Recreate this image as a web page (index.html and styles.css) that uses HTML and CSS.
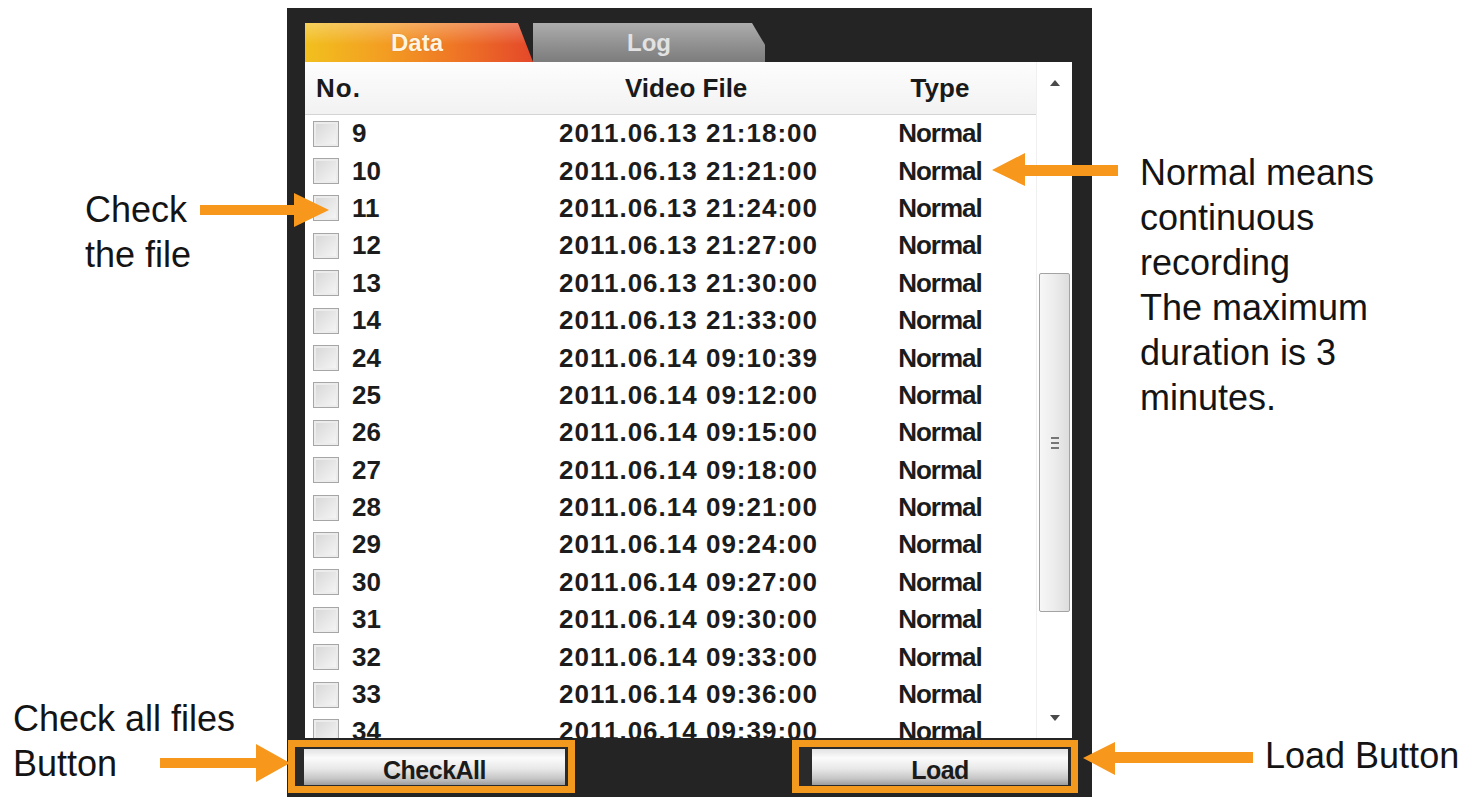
FILE: index.html
```html
<!DOCTYPE html>
<html lang="en">
<head>
<meta charset="utf-8">
<title>Data / Log file list</title>
<link rel="stylesheet" href="styles.css">
</head>
<body>
<div class="stage">
  <div class="notes notes-left">
    <div class="note note-check"><p>Check</p><p>the file</p></div>
    <div class="note note-all"><p>Check all files</p><p>Button</p></div>
  </div>

  <div class="panel">
    <div class="tabs">
      <div class="tab tab-data">Data</div>
      <div class="tab tab-log">Log</div>
    </div>
    <div class="list">
      <div class="table">
        <div class="thead">
          <div class="th-no">No.</div>
          <div class="th-file">Video File</div>
          <div class="th-type">Type</div>
        </div>
        <div class="row"><span class="cb"></span><span class="no">9</span><span class="date">2011.06.13 21:18:00</span><span class="type">Normal</span></div>
        <div class="row"><span class="cb"></span><span class="no">10</span><span class="date">2011.06.13 21:21:00</span><span class="type">Normal</span></div>
        <div class="row"><span class="cb"></span><span class="no">11</span><span class="date">2011.06.13 21:24:00</span><span class="type">Normal</span></div>
        <div class="row"><span class="cb"></span><span class="no">12</span><span class="date">2011.06.13 21:27:00</span><span class="type">Normal</span></div>
        <div class="row"><span class="cb"></span><span class="no">13</span><span class="date">2011.06.13 21:30:00</span><span class="type">Normal</span></div>
        <div class="row"><span class="cb"></span><span class="no">14</span><span class="date">2011.06.13 21:33:00</span><span class="type">Normal</span></div>
        <div class="row"><span class="cb"></span><span class="no">24</span><span class="date">2011.06.14 09:10:39</span><span class="type">Normal</span></div>
        <div class="row"><span class="cb"></span><span class="no">25</span><span class="date">2011.06.14 09:12:00</span><span class="type">Normal</span></div>
        <div class="row"><span class="cb"></span><span class="no">26</span><span class="date">2011.06.14 09:15:00</span><span class="type">Normal</span></div>
        <div class="row"><span class="cb"></span><span class="no">27</span><span class="date">2011.06.14 09:18:00</span><span class="type">Normal</span></div>
        <div class="row"><span class="cb"></span><span class="no">28</span><span class="date">2011.06.14 09:21:00</span><span class="type">Normal</span></div>
        <div class="row"><span class="cb"></span><span class="no">29</span><span class="date">2011.06.14 09:24:00</span><span class="type">Normal</span></div>
        <div class="row"><span class="cb"></span><span class="no">30</span><span class="date">2011.06.14 09:27:00</span><span class="type">Normal</span></div>
        <div class="row"><span class="cb"></span><span class="no">31</span><span class="date">2011.06.14 09:30:00</span><span class="type">Normal</span></div>
        <div class="row"><span class="cb"></span><span class="no">32</span><span class="date">2011.06.14 09:33:00</span><span class="type">Normal</span></div>
        <div class="row"><span class="cb"></span><span class="no">33</span><span class="date">2011.06.14 09:36:00</span><span class="type">Normal</span></div>
        <div class="row"><span class="cb"></span><span class="no">34</span><span class="date">2011.06.14 09:39:00</span><span class="type">Normal</span></div>
      </div>
      <div class="scroll">
        <div class="sb-btn"><span class="arrow-up"></span></div>
        <div class="thumb"><span class="grip"></span></div>
        <div class="sb-btn sb-btn-down"><span class="arrow-down"></span></div>
      </div>
    </div>
    <div class="actions">
      <div class="frame frame-all"><div class="btn">CheckAll</div></div>
      <div class="frame frame-load"><div class="btn">Load</div></div>
    </div>
  </div>

  <div class="notes notes-right">
    <div class="note note-normal"><p>Normal means</p><p>continuous</p><p>recording</p><p>The maximum</p><p>duration is 3</p><p>minutes.</p></div>
    <div class="note note-load"><p>Load Button</p></div>
  </div>

  <svg class="arrows" width="1468" height="801" viewBox="0 0 1468 801" aria-hidden="true">
    <polygon points="200,205 294,205 294,193 329,210 294,227 294,215 200,215"/>
    <polygon points="1118,165 1025,165 1025,153 992,170 1025,186 1025,176 1118,176"/>
    <polygon points="160,758 256,758 256,744 290,763 256,782 256,768 160,768"/>
    <polygon points="1253,752 1115,752 1115,742 1083,758 1115,775 1115,763 1253,763"/>
  </svg>
</div>
</body>
</html>
```

FILE: styles.css
```css
* { box-sizing: border-box; }
html, body { margin: 0; padding: 0; }
body {
  width: 1468px;
  height: 801px;
  overflow: hidden;
  background: #ffffff;
  font-family: "Liberation Sans", Arial, sans-serif;
}
.stage {
  position: relative;
  display: flex;
  width: 1468px;
  height: 801px;
}

/* annotations */
.notes {
  display: flex;
  flex-direction: column;
  font-size: 36px;
  line-height: 45px;
  color: #141414;
}
.note p { margin: 0; white-space: nowrap; }
.notes-left { width: 287px; flex-shrink: 0; padding-bottom: 15px; }
.note-check { margin: 187px 0 0 85px; }
.note-all { margin: auto 0 0 13px; }
.notes-right { flex: 1; padding-bottom: 23px; }
.note-normal { margin: 150px 0 0 48px; }
.note-load { margin: auto 0 0 173px; }

.arrows {
  position: absolute;
  left: 0;
  top: 0;
  pointer-events: none;
  fill: #f7981d;
}

/* panel */
.panel {
  margin-top: 8px;
  width: 805px;
  height: 789px;
  flex-shrink: 0;
  background: #242424;
  display: flex;
  flex-direction: column;
}
.tabs {
  height: 54px;
  display: flex;
  align-items: flex-end;
  padding-left: 18px;
}
.tab {
  height: 39px;
  display: flex;
  align-items: center;
  justify-content: center;
  font-weight: bold;
  font-size: 24px;
}
.tab-data {
  width: 228px;
  clip-path: polygon(0 0, 93.4% 0, 100% 100%, 0 100%);
  background:
    linear-gradient(to bottom, rgba(255,255,255,0.28), rgba(255,255,255,0) 55%),
    linear-gradient(to right, #f2c01e 0%, #f39d22 35%, #ef7725 65%, #e4482a 100%);
  color: #fff4e0;
  text-shadow: 0 0 1px rgba(120,60,0,0.4);
  padding-right: 4px;
}
.tab-log {
  width: 232px;
  clip-path: polygon(0 0, 94.4% 0, 100% 56%, 100% 100%, 0 100%);
  background: linear-gradient(to bottom, #adadad 0%, #919191 55%, #7c7c7c 100%);
  color: #e2e2e2;
}

.list {
  height: 676px;
  margin: 0 20px 0 18px;
  background: #ffffff;
  display: flex;
  overflow: hidden;
}
.table {
  width: 731px;
  display: flex;
  flex-direction: column;
}
.thead {
  height: 53px;
  flex-shrink: 0;
  display: grid;
  grid-template-columns: 254px 321px 120px;
  align-items: center;
  border-bottom: 1px solid #d4d4d4;
  background: linear-gradient(to bottom, #fdfdfd, #f2f2f2);
  font-weight: bold;
  font-size: 26px;
  color: #1a1a1a;
}
.th-no { padding-left: 11px; letter-spacing: 1px; }
.th-file { padding-left: 66px; }
.th-type { text-align: center; }

.row {
  height: 37.4px;
  flex-shrink: 0;
  display: grid;
  grid-template-columns: 47px 207px 321px 120px;
  align-items: center;
  font-weight: bold;
  font-size: 26px;
  color: #1c1c1c;
}
.cb {
  width: 26px;
  height: 26px;
  margin-left: 8px;
  border: 1px solid #a6a6a6;
  background: linear-gradient(135deg, #d6d6d6, #f7f7f7);
  box-shadow: inset 0 0 0 2px #ececec;
}
.date { letter-spacing: 1px; }
.type { text-align: center; letter-spacing: -1px; }

.scroll {
  width: 36px;
  display: flex;
  flex-direction: column;
  align-items: center;
  border-left: 1px solid #f0f0f0;
}
.sb-btn {
  width: 100%;
  height: 42px;
  display: flex;
  align-items: center;
  justify-content: center;
  flex-shrink: 0;
}
.sb-btn-down { margin-top: auto; height: 40px; }
.arrow-up {
  width: 0; height: 0;
  border-left: 5px solid transparent;
  border-right: 5px solid transparent;
  border-bottom: 6px solid #4a4a4a;
}
.arrow-down {
  width: 0; height: 0;
  border-left: 5px solid transparent;
  border-right: 5px solid transparent;
  border-top: 6px solid #4a4a4a;
}
.thumb {
  margin-top: 169px;
  width: 31px;
  height: 339px;
  flex-shrink: 0;
  border: 1px solid #a3a3a3;
  border-radius: 2px;
  background: linear-gradient(to right, #f7f7f7, #ececec 50%, #dddddd);
  display: flex;
  align-items: center;
  justify-content: center;
}
.grip {
  width: 8px;
  height: 12px;
  background: repeating-linear-gradient(to bottom, #767676 0 2px, transparent 2px 5px);
}

/* bottom buttons */
.actions {
  height: 59px;
  display: flex;
  justify-content: space-between;
  padding: 2px 14px 0 1px;
}
.frame {
  height: 53px;
  border: 7px solid #f39a1e;
  background: #2a2a2a;
  display: flex;
  padding: 2px 3px 1px 9px;
}
.frame-all { width: 287px; }
.frame-load { width: 286px; padding-left: 13px; }
.btn {
  flex: 1;
  display: flex;
  align-items: center;
  justify-content: center;
  padding-top: 6px;
  font-weight: bold;
  font-size: 25px;
  letter-spacing: -0.5px;
  color: #1b1b1b;
  background: linear-gradient(to bottom, #e2e2e2 0%, #fbfbfb 25%, #e8e8e8 55%, #c6c6c6 82%, #9c9c9c 100%);
}
```
